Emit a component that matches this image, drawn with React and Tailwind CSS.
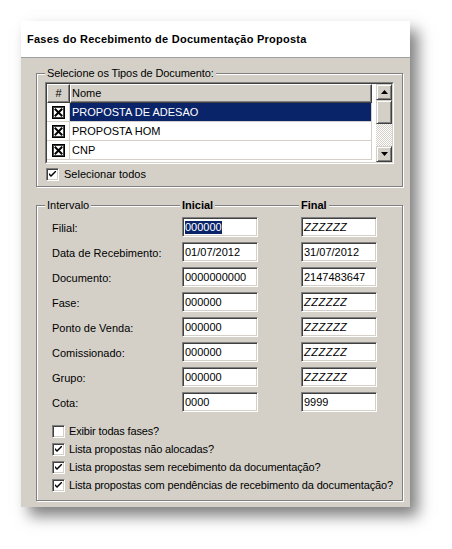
import React from "react";

const FONT = "font-['Liberation_Sans',Arial,sans-serif]";

function XBox() {
  return (
    <svg width="13" height="13" viewBox="0 0 13 13" className="block">
      <rect x="0.5" y="0.5" width="12" height="12" fill="#fff" stroke="#000" />
      <rect x="1.5" y="1.5" width="10" height="10" fill="none" stroke="#404040" />
      <path d="M3.5 3.5 L9.5 9.5 M9.5 3.5 L3.5 9.5" stroke="#000" strokeWidth="2" strokeLinecap="square" />
    </svg>
  );
}

function Check({ checked }) {
  return (
    <div className="w-[13px] h-[13px] border border-t-[#808080] border-l-[#808080] border-b-white border-r-white shadow-[inset_1px_1px_0_#404040,inset_-1px_-1px_0_#d4d0c8] bg-white flex items-center justify-center shrink-0">
      {checked && (
        <svg width="7" height="7" viewBox="0 0 7 7" className="block">
          <path d="M0 2 L0 4 L2 6 L7 1 L7 -1 L2 4 Z" fill="#000" />
        </svg>
      )}
    </div>
  );
}

function Input({ children, italic }) {
  return (
    <div
      className={`w-[76px] h-[20px] bg-white border border-t-[#808080] border-l-[#808080] border-b-white border-r-white shadow-[inset_1px_1px_0_#404040,inset_-1px_-1px_0_#d4d0c8] pl-[2px] flex items-center leading-[13px] ${italic ? "italic tracking-[0.5px]" : ""}`}
    >
      {children}
    </div>
  );
}

function ScrollBtn({ up }) {
  return (
    <div className="w-[16px] h-[16px] bg-[#d4d0c8] border border-t-[#d4d0c8] border-l-[#d4d0c8] border-b-[#404040] border-r-[#404040] shadow-[inset_1px_1px_0_#fff,inset_-1px_-1px_0_#808080] flex items-center justify-center">
      <svg width="7" height="4" viewBox="0 0 7 4" className="block">
        {up ? <path d="M3.5 0 L7 4 L0 4 Z" fill="#000" /> : <path d="M0 0 L7 0 L3.5 4 Z" fill="#000" />}
      </svg>
    </div>
  );
}

const rowsList = ["PROPOSTA DE ADESAO", "PROPOSTA HOM", "CNP"];

const fields = [
  ["Filial:", "000000", "ZZZZZZ", true],
  ["Data de Recebimento:", "01/07/2012", "31/07/2012", false],
  ["Documento:", "0000000000", "2147483647", false],
  ["Fase:", "000000", "ZZZZZZ", false],
  ["Ponto de Venda:", "000000", "ZZZZZZ", false],
  ["Comissionado:", "000000", "ZZZZZZ", false],
  ["Grupo:", "000000", "ZZZZZZ", false],
  ["Cota:", "0000", "9999", false],
];

const checks = [
  ["Exibir todas fases?", false],
  ["Lista propostas não alocadas?", true],
  ["Lista propostas sem recebimento da documentação?", true],
  ["Lista propostas com pendências de recebimento da documentação?", true],
];

export default function App() {
  return (
    <div className={`w-[452px] h-[549px] bg-white pt-[21px] pl-[21px] ${FONT} text-[11px] text-black overflow-hidden`}>
      <div className="w-[389px] shadow-[8px_9px_14px_rgba(0,0,0,0.5)]">
        <div className="h-[37px] bg-white border-b border-[#a0a0a0] flex items-center pl-[6px] font-bold text-[11px] tracking-[0.25px]">
          Fases do Recebimento de Documentação Proposta
        </div>
        <div className="bg-[#d4d0c8] h-[449px] pt-[15px] pl-[15px]">
          {/* Group 1 */}
          <div className="relative w-[367px] h-[114px] border border-[#808080] shadow-[inset_1px_1px_0_#fff,1px_1px_0_#fff] pt-[8px] pl-[8px]">
            <div className="absolute left-[8px] top-[-8px] px-[2px] bg-[#d4d0c8] leading-[14px] tracking-[-0.1px]">
              Selecione os Tipos de Documento:
            </div>
            <div className="w-[349px] border border-t-[#808080] border-l-[#808080] border-b-white border-r-white">
              <div className="border border-t-[#404040] border-l-[#404040] border-b-[#d4d0c8] border-r-[#d4d0c8] bg-white flex h-[80px]">
                <div className="w-[329px] flex flex-col">
                  <div className="flex h-[19px]">
                    <div className="w-[23px] bg-[#d4d0c8] border border-t-white border-l-white border-b-[#404040] border-r-[#404040] shadow-[inset_-1px_-1px_0_#808080] flex items-center justify-center leading-[13px]">
                      #
                    </div>
                    <div className="w-[302px] bg-[#d4d0c8] border border-t-white border-l-white border-b-[#404040] border-r-[#404040] shadow-[inset_-1px_-1px_0_#808080] flex items-center pl-[1px] leading-[13px]">
                      Nome
                    </div>
                  </div>
                  {rowsList.map((r, i) => (
                    <div key={r} className="flex h-[19px]">
                      <div className="w-[23px] bg-white border-r border-b border-[#d4d0c8] flex items-center justify-center">
                        <XBox />
                      </div>
                      <div
                        className={`w-[302px] border-b border-r border-[#d4d0c8] flex items-center pl-[2px] leading-[13px] ${
                          i === 0 ? "bg-[#0a246a] text-white" : "bg-white"
                        }`}
                      >
                        {r}
                      </div>
                    </div>
                  ))}
                </div>
                <div className="w-[16px] flex flex-col">
                  <ScrollBtn up />
                  <div className="h-[24px] bg-[#d4d0c8] border border-t-[#d4d0c8] border-l-[#d4d0c8] border-b-[#404040] border-r-[#404040] shadow-[inset_1px_1px_0_#fff,inset_-1px_-1px_0_#808080]" />
                  <div className="flex-1 bg-[repeating-conic-gradient(#ffffff_0_25%,#d4d0c8_0_50%)] bg-[length:2px_2px]" />
                  <ScrollBtn />
                </div>
              </div>
            </div>
            <div className="flex items-center mt-[4px] ml-[1px] gap-[5px] leading-[13px]">
              <Check checked />
              <span>Selecionar todos</span>
            </div>
          </div>

          {/* Group 2 */}
          <div className="relative mt-[18px] w-[367px] h-[296px] border border-[#808080] shadow-[inset_1px_1px_0_#fff,1px_1px_0_#fff] pt-[11px] pl-[15px]">
            <div className="absolute left-[8px] top-[-8px] px-[2px] bg-[#d4d0c8] leading-[14px]">Intervalo</div>
            <div className="absolute left-[143px] top-[-8px] px-[2px] bg-[#d4d0c8] leading-[14px] font-bold">Inicial</div>
            <div className="absolute left-[262px] top-[-8px] px-[2px] bg-[#d4d0c8] leading-[14px] font-bold">Final</div>
            <div className="flex flex-col gap-[5px]">
              {fields.map(([label, a, b, sel]) => (
                <div key={label} className="flex items-center h-[20px]">
                  <div className="w-[130px] leading-[13px] pt-[2px]">{label}</div>
                  <Input>
                    {sel ? <span className="bg-[#0a246a] text-white">{a}</span> : a}
                  </Input>
                  <div className="w-[43px]" />
                  <Input italic={b === "ZZZZZZ"}>{b}</Input>
                </div>
              ))}
            </div>
            <div className="flex flex-col mt-[10px]">
              {checks.map(([t, c]) => (
                <div key={t} className="flex items-center h-[18px] gap-[4px] leading-[13px] whitespace-nowrap">
                  <Check checked={c} />
                  <span className="tracking-[-0.15px]">{t}</span>
                </div>
              ))}
            </div>
          </div>
        </div>
      </div>
    </div>
  );
}
